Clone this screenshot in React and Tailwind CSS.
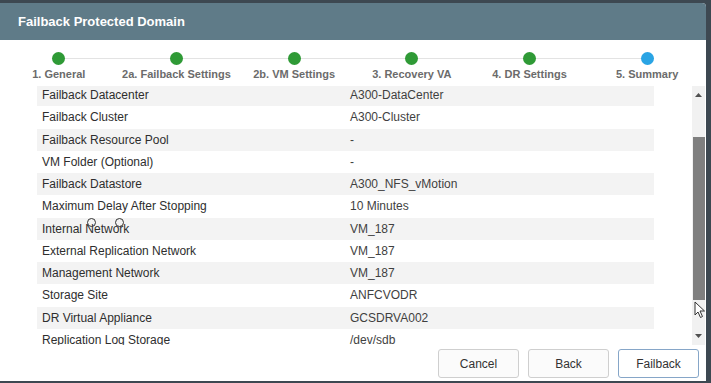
const steps = [
  { label: "1. General", done: true },
  { label: "2a. Failback Settings", done: true },
  { label: "2b. VM Settings", done: true },
  { label: "3. Recovery VA", done: true },
  { label: "4. DR Settings", done: true },
  { label: "5. Summary", done: false },
];

const rows = [
  ["Failback Datacenter", "A300-DataCenter"],
  ["Failback Cluster", "A300-Cluster"],
  ["Failback Resource Pool", "-"],
  ["VM Folder (Optional)", "-"],
  ["Failback Datastore", "A300_NFS_vMotion"],
  ["Maximum Delay After Stopping", "10 Minutes"],
  ["Internal Network", "VM_187"],
  ["External Replication Network", "VM_187"],
  ["Management Network", "VM_187"],
  ["Storage Site", "ANFCVODR"],
  ["DR Virtual Appliance", "GCSDRVA002"],
  ["Replication Log Storage", "/dev/sdb"],
];

function Stepper() {
  return (
    <div className="grid grid-cols-6 pt-[12px] h-[46px]">
      {steps.map((s, i) => (
        <div key={s.label} className="flex flex-col items-center">
          <div className="flex items-center w-full">
            <div className={`flex-1 h-px ${i === 0 ? "" : "bg-[#e3e3e3]"}`} />
            <div
              className={`w-[13px] h-[13px] rounded-full ${s.done ? "bg-[#2f9a36]" : "bg-[#2aa4e4]"}`}
            />
            <div className={`flex-1 h-px ${i === steps.length - 1 ? "" : "bg-[#e3e3e3]"}`} />
          </div>
          <div className="mt-[3px] text-[11px] font-bold text-[#6b6b6b] leading-[13px] whitespace-nowrap">
            {s.label}
          </div>
        </div>
      ))}
    </div>
  );
}

function Scrollbar() {
  return (
    <div className="w-[13px] h-full bg-[#f1f1f1] flex flex-col items-center">
      <div className="h-[18px] flex items-center justify-center">
        <svg width="7" height="4" viewBox="0 0 7 4">
          <path d="M0 4 L3.5 0 L7 4 Z" fill="#505050" />
        </svg>
      </div>
      <div className="h-[33px]" />
      <div className="w-[12px] h-[163px] bg-[#7f7f7f]" />
      <div className="flex-1" />
      <div className="h-[18px] flex items-center justify-center">
        <svg width="7" height="4" viewBox="0 0 7 4">
          <path d="M0 0 L3.5 4 L7 0 Z" fill="#505050" />
        </svg>
      </div>
    </div>
  );
}

export default function App() {
  return (
    <div
      className="w-[711px] h-[383px] bg-[#3d4851] pt-[3px] pr-[5px] pb-[2px] overflow-hidden relative"
      style={{ fontFamily: '"Liberation Sans", Arial, sans-serif' }}
    >
      <div className="h-full bg-white rounded-tr-[4px] flex flex-col overflow-hidden">
        <div className="h-[37px] bg-[#5f7b88] flex items-center pl-[18px] shrink-0">
          <h1 className="text-white text-[13px] font-bold">Failback Protected Domain</h1>
        </div>

        <Stepper />

        <div className="flex h-[259px] shrink-0">
          <div className="w-[37px]" />
          <div className="w-[617px] overflow-hidden">
            <div className="-mt-[2px]">
              {rows.map(([k, v], i) => (
                <div
                  key={k}
                  className={`flex items-center h-[22.25px] text-[12px] ${i % 2 === 0 ? "bg-[#f3f3f3]" : "bg-white"}`}
                >
                  <div className="w-[313px] pl-[5px] text-[#2e2e2e]">{k}</div>
                  <div className="text-[#3f3f3f]">{v}</div>
                </div>
              ))}
            </div>
          </div>
          <div className="flex-1" />
          <Scrollbar />
          <div className="w-[1px]" />
        </div>

        <div className="flex justify-end gap-[9px] pr-[7px] pt-[4px]">
          <button className="w-[81px] h-[29px] rounded-[3px] border border-[#cfcfcf] bg-[#fbfbfb] text-[12px] text-[#333]">
            Cancel
          </button>
          <button className="w-[81px] h-[29px] rounded-[3px] border border-[#cfcfcf] bg-[#fbfbfb] text-[12px] text-[#333]">
            Back
          </button>
          <button className="w-[81px] h-[29px] rounded-[3px] border border-[#86a6c8] bg-white text-[12px] text-[#333]">
            Failback
          </button>
        </div>
      </div>

      <div className="absolute left-[87px] top-[218px] w-[9px] h-[9px] rounded-full border border-[#333]" />
      <div className="absolute left-[115px] top-[218px] w-[9px] h-[9px] rounded-full border border-[#333]" />

      <svg className="absolute left-[694px] top-[301px]" width="12" height="18" viewBox="0 0 12 18">
        <path d="M1 1 L1 14 L4 11 L6.5 16.5 L8.5 15.5 L6 10 L10.5 10 Z" fill="white" stroke="#333" strokeWidth="1" strokeLinejoin="round" />
      </svg>
    </div>
  );
}
